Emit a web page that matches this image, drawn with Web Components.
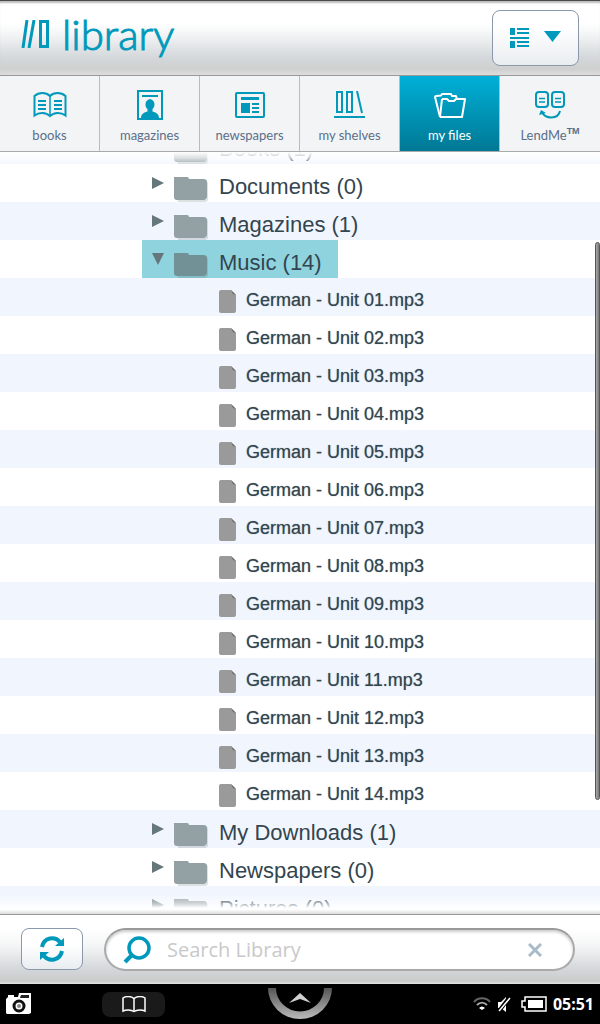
<!DOCTYPE html>
<html lang="en">
<head>
<meta charset="utf-8">
<meta name="viewport" content="width=device-width, initial-scale=1">
<title>library</title>
<style>
  html, body { height: 100%; }
  body {
    margin: 0;
    font-family: "Liberation Sans", Arial, sans-serif;
    --teal: #0099bb;
    --slate: #5b6f8a;
    --ink: #33454e;
  }
</style>
</head>
<body>
<library-app></library-app>

<script>
const ICONS = {
  books: `<svg width="34" height="26" viewBox="0 0 34 26" fill="none" stroke="currentColor" stroke-width="2">
    <path d="M17 4C13 0 6 0 1.500 4V23.500C6 20 13 20 17 24C21 20 28 20 32.500 23.500V4C28 0 21 0 17 4Z"/>
    <path d="M17 4V24" stroke-width="1.500"/>
    <path d="M5 9h8M5 13h8M5 17h8M21 9h8M21 13h8M21 17h8"/></svg>`,
  magazines: `<svg width="26" height="30" viewBox="0 0 26 30">
    <path d="M1 1h24v28H1Z" fill="none" stroke="currentColor" stroke-width="2"/>
    <path d="M5 5h16v2H5ZM4 28.500C4 24 6 23 10.500 21.500V19C7.500 17 7.500 10 13 9C18.500 10 18.500 17 15.500 19V21.500C20 23 22 24 22 28.500Z" fill="currentColor"/></svg>`,
  newspapers: `<svg width="30" height="26" viewBox="0 0 30 26">
    <rect x="1" y="1" width="28" height="24" rx="1" fill="none" stroke="currentColor" stroke-width="2"/>
    <path d="M6 5h18v3H6ZM6 11h9v10H6ZM17 11h7v2h-7ZM17 15h7v2h-7ZM17 19h7v2h-7Z" fill="currentColor"/></svg>`,
  shelves: `<svg width="32" height="28" viewBox="0 0 32 28" fill="none" stroke="currentColor" stroke-width="2">
    <path d="M3 1h5v20H3ZM13 1h5v20h-5ZM0 26h31"/><path d="M23 0L28 22"/></svg>`,
  files: `<svg width="34" height="26" viewBox="0 0 34 26" fill="none" stroke="currentColor" stroke-width="2" stroke-linejoin="round">
    <path d="M7 25L2 5Q2 4 3 4L8 3.500L9 2H18L19 4H23L24 7"/>
    <path d="M9 7H14L16 9H21L23 7H32L29 25H7"/><path d="M9 7L7 25"/></svg>`,
  lend: `<svg width="32" height="28" viewBox="0 0 32 28" fill="none" stroke="currentColor" stroke-width="2">
    <rect x="2" y="1" width="12" height="15" rx="3"/><rect x="18" y="1" width="12" height="15" rx="3"/>
    <path d="M5 7.500h6M5 11h6M21 7.500h6M21 11h6" stroke-width="1.500"/>
    <path d="M8 21C11 28 24 29 26 20"/><path d="M5 24L7 19L12 22Z" fill="currentColor" stroke="none"/></svg>`,
  camera: `<svg width="26" height="22" viewBox="0 0 26 22">
    <path d="M2 4V2H8V4H12L13 0H25V6V20L23 21H1L0 20V6Z" fill="#fff"/>
    <path d="M15 2h8v3h-9Z" fill="#222"/><circle cx="13" cy="13" r="5" fill="#fff" stroke="#111" stroke-width="3"/>
    <circle cx="13" cy="13" r="2" fill="#888"/></svg>`,
  reading: `<svg width="24" height="17" viewBox="0 0 24 17" fill="none" stroke="#fff" stroke-width="1.500">
    <path d="M12 2.500C9 0 4 0 1 2V15C4 13.500 9 13.500 12 15.500C15 13.500 20 13.500 23 15V2C20 0 15 0 12 2.500Z"/><path d="M12 2V15"/></svg>`,
  home: `<svg width="66" height="36" viewBox="0 0 66 36">
    <defs><linearGradient id="ring" x2="0" y2="1"><stop offset="0" stop-color="#555"/><stop offset="1" stop-color="#bbb"/></linearGradient></defs>
    <path d="M1 4A32 31 0 0 0 65 4H57A24 23.500 0 0 1 9 4Z" fill="url(#ring)"/>
    <path d="M33 9L44 19L33 15L22 19Z" fill="#d0d0d0"/></svg>`,
  wifi: `<svg width="18" height="14" viewBox="0 0 18 14" fill="none" stroke-width="2">
    <path d="M1 5C5 0 13 0 17 5" stroke="#666"/><path d="M4 8C7 5 11 5 14 8" stroke="#aaa"/>
    <path d="M6 11C8 9 10 9 12 11L9 13Z" fill="#fff" stroke="none"/></svg>`,
  mute: `<svg width="14" height="15" viewBox="0 0 14 15">
    <path d="M1 5H4L9 0V15L4 11H1Z" fill="#fff"/><path d="M12 1L2 14" stroke="#000" stroke-width="4"/><path d="M13 1L2 14" stroke="#fff" stroke-width="1.500"/></svg>`,
  battery: `<svg width="26" height="16" viewBox="0 0 26 16">
    <path d="M4 1H25V15H4V11H1V5H4Z" fill="none" stroke="#fff" stroke-width="1.500"/><path d="M7 4h15v8H7Z" fill="#fff"/></svg>`
};

class LibraryHeader extends HTMLElement {
  constructor() {
    super();
    this.attachShadow({ mode: "open" });
    this.shadowRoot.innerHTML = `
      <style>
        :host {
          display: flex;
          align-items: center;
          justify-content: space-between;
          box-sizing: border-box;
          height: 76px;
          padding: 0 21px;
          background: linear-gradient(#fff 30%, #f6f7f8 42%, #d3d7da 78%, #cfcfcf 92%, #dedede);
          border-top: 1px solid #4d494b;
          border-bottom: 1px solid #999;
          box-shadow: inset 0 3px 2px -1px #bbb;
        }
        h1 {
          display: flex;
          align-items: center;
          gap: 12px;
          margin: 0 0 8px;
          color: var(--teal);
          font: 300 42px/48px Lato, sans-serif;
          -webkit-text-stroke: 1px var(--teal);
        }
        button {
          display: flex;
          align-items: center;
          justify-content: center;
          gap: 15px;
          width: 87px;
          height: 56px;
          padding: 0;
          border: 1px solid #8a98ac;
          border-radius: 8px;
          background: linear-gradient(#fff 30%, #e9edf0);
          color: var(--teal);
        }
        svg { display: block; }
      </style>
      <h1>
        <svg width="29" height="28" viewBox="0 0 29 28" fill="none" stroke="currentColor" aria-hidden="true">
          <path d="M6 0L2 28M13 0L8 28" stroke-width="3"/><path d="M19.500 1.500h7v25h-7Z" stroke-width="3"/>
        </svg>
        <span>library</span>
      </h1>
      <button type="button" aria-label="View options">
        <svg width="19" height="20" viewBox="0 0 19 20" fill="currentColor">
          <path d="M0 0h5v7H0ZM7 0h12v2H7ZM7 4h12v2H7ZM0 9h19v2H0ZM0 13h5v7H0ZM7 13h12v2H7ZM7 17h12v2H7Z"/>
        </svg>
        <svg width="17" height="15" viewBox="0 0 17 15" fill="currentColor"><path d="M0 0h17L8.500 11Z"/></svg>
      </button>`;
  }
}

class LibraryTab extends HTMLElement {
  constructor() {
    super();
    this.attachShadow({ mode: "open" });
    this.shadowRoot.innerHTML = `
      <style>
        :host { display: block; border-right: 1px solid #bbb; }
        :host(:last-child) { border-right: 0; }
        a {
          display: grid;
          grid-template-rows: 1fr 20px;
          justify-items: center;
          box-sizing: border-box;
          height: 75px;
          padding: 8px 0 6px;
          background: #f2f4f5;
          color: var(--slate);
          font: 13px/20px Lato, sans-serif;
          text-decoration: none;
        }
        .icon { display: flex; align-items: center; color: var(--teal); }
        :host([active]) a { background: linear-gradient(#00b0d8, #007894); color: #fff; }
        :host([active]) .icon { color: #fff; }
        ::slotted(sup) { font: bold 9px/10px "Liberation Sans", sans-serif; vertical-align: 6px; }
      </style>
      <a href="#"><span class="icon">${ICONS[this.getAttribute("icon")]}</span><span><slot></slot></span></a>`;
  }
}

class TreeItem extends HTMLElement {
  constructor() {
    super();
    this.attachShadow({ mode: "open" });
    const folder = `
      <svg class="arrow" width="12" height="12" viewBox="0 0 12 12"><path d="${this.hasAttribute("open") ? "M0 0H12L6 12Z" : "M0 0L12 6L0 12Z"}" fill="#66777b"/></svg>
      <svg class="folder" width="36" height="26" viewBox="0 0 36 26">
        <path d="M2 4H14L17 5H32Q34 5 34 8V24Q33 26 31 26H4Z" fill="#5c6b70" opacity=".2"/>
        <path d="M0 1H13Q15 1 15 3H30Q32 3 33 5V21Q32 24 30 24H3Q0 24 0 21Z" fill="${this.hasAttribute("open") ? "#729197" : "#93a0a4"}"/>
      </svg>`;
    const file = `
      <svg class="file" width="17" height="23" viewBox="0 0 17 23">
        <path d="M2 0H12L17 5V21Q17 23 15 23H2Q0 23 0 21V2Q0 0 2 0Z" fill="#9a9a9a"/><path d="M12 0L17 5L14 4Z" fill="#666"/>
      </svg>`;
    this.shadowRoot.innerHTML = `
      <style>
        :host { display: flex; flex: none; height: 38px; padding-left: 142px; }
        .row {
          display: flex;
          box-sizing: border-box;
          padding: 0 16px 0 10px;
          color: var(--ink);
          font-size: 22px;
          line-height: 46px;
          white-space: nowrap;
        }
        :host([open]) .row { background: #8fd3df; }
        :host([file]) .row {
          padding-left: 77px;
          font-size: 18px;
          line-height: 44px;
          text-shadow: 0 0 1px rgba(51, 69, 78, 0.6);
        }
        svg { flex: none; }
        .arrow { margin: 13px 10px 0 0; }
        .folder { margin: 12px 9px 0 0; }
        .file { margin: 12px 10px 0 0; }
      </style>
      <div class="row">${this.hasAttribute("file") ? file : folder}<span><slot></slot></span></div>`;
  }
}

class FileTree extends HTMLElement {
  constructor() {
    super();
    this.attachShadow({ mode: "open" });
    this.shadowRoot.innerHTML = `
      <style>
        :host { display: block; flex: 1; min-height: 0; position: relative; }
        .scroller { height: 100%; overflow: auto; scrollbar-width: none; }
        ::slotted(tree-item:nth-child(odd)) { background: #f1f6fe; }
        /* fades and thumb lie over the scrolling rows */
        .fade { position: absolute; left: 0; right: 0; pointer-events: none; }
        .top { top: 0; height: 14px; background: linear-gradient(#fff, rgba(255,255,255,0.7) 40%, rgba(255,255,255,0)); }
        .bottom { bottom: 0; height: 20px; background: linear-gradient(rgba(255,255,255,0), rgba(255,255,255,0.6) 50%, #fff 70%, #fff 76%, #ddd); }
        .thumb {
          position: absolute;
          top: 90px;
          bottom: 114px;
          right: 0;
          width: 5px;
          box-sizing: border-box;
          border: 1px solid #555;
          border-radius: 3px;
          background: linear-gradient(90deg, #aaa, #777);
        }
      </style>
      <div class="scroller"><slot></slot></div>
      <div class="fade top"></div>
      <div class="fade bottom"></div>
      <div class="thumb"></div>`;
  }

  scrollToOffset(offset) {
    this.shadowRoot.querySelector(".scroller").scrollTop = offset;
  }
}

class SearchBar extends HTMLElement {
  constructor() {
    super();
    this.attachShadow({ mode: "open" });
    this.shadowRoot.innerHTML = `
      <style>
        :host {
          display: flex;
          gap: 21px;
          box-sizing: border-box;
          height: 70px;
          padding: 13px 25px 13px 21px;
          border-top: 1px solid #999;
          background: linear-gradient(#fff 20%, #f4f5f6 45%, #d3d6d9 80%, #cacaca 96%, #e4e4e4);
        }
        button { display: flex; align-items: center; justify-content: center; padding: 0; border: 0; background: none; color: var(--teal); }
        .refresh {
          width: 62px;
          height: 42px;
          border: 1px solid #8a98ac;
          border-radius: 8px;
          background: linear-gradient(#fff 40%, #e9edf0);
        }
        .search {
          display: flex;
          flex: 1;
          align-items: center;
          gap: 16px;
          min-width: 0;
          box-sizing: border-box;
          height: 43px;
          padding: 0 31px 0 17px;
          border: 2px solid #aaa;
          border-top-color: #999;
          border-radius: 22px;
          background: #fff;
          box-shadow: inset 0 2px 3px #ccc;
          color: var(--teal);
        }
        svg { display: block; flex: none; }
        input {
          flex: 1;
          min-width: 0;
          padding: 0;
          border: 0;
          outline: 0;
          background: none;
          color: var(--ink);
          font: 20px/28px "Open Sans", sans-serif;
        }
        input::placeholder { color: #c9c9c9; opacity: 1; }
        .clear { color: #a9bac8; }
      </style>
      <button class="refresh" type="button" aria-label="Refresh">
        <svg width="26" height="26" viewBox="0 0 26 26" fill="none" stroke="currentColor" stroke-width="4">
          <path d="M3 11C5 1 16 0 21 6"/><path d="M23 15C21 25 10 26 5 20"/>
          <path d="M25 2V10H16ZM1 24V16H10Z" fill="currentColor" stroke="none"/>
        </svg>
      </button>
      <label class="search">
        <svg width="28" height="28" viewBox="0 0 28 28" fill="none" stroke="currentColor">
          <circle cx="16" cy="12" r="10" stroke-width="3.500"/><path d="M9 19L2 26" stroke-width="4"/>
        </svg>
        <input type="text" placeholder="Search Library" aria-label="Search Library">
        <button class="clear" type="button" aria-label="Clear">
          <svg width="14" height="14" viewBox="0 0 14 14" stroke="currentColor" stroke-width="3"><path d="M1 1L13 13M13 1L1 13"/></svg>
        </button>
      </label>`;
  }
}

class StatusBar extends HTMLElement {
  constructor() {
    super();
    this.attachShadow({ mode: "open" });
    this.shadowRoot.innerHTML = `
      <style>
        :host {
          display: grid;
          grid-template-columns: 1fr 66px 1fr;
          height: 40px;
          background: #000;
          color: #fff;
          font: bold 16px/24px "Noto Sans", sans-serif;
        }
        div { display: flex; align-items: center; }
        .left { gap: 70px; padding-left: 6px; }
        .right { justify-content: flex-end; gap: 6px; padding-right: 6px; }
        button { display: flex; align-items: center; justify-content: center; padding: 0; border: 0; background: none; }
        .reading { width: 63px; height: 25px; border-radius: 8px; background: #1a1a1a; }
        .home { align-items: start; }
        .home svg { display: block; }
        .battery { display: flex; margin: 0 0 0 4px; }
      </style>
      <div class="left">
        <button type="button" aria-label="Camera">${ICONS.camera}</button>
        <button class="reading" type="button" aria-label="Now reading">${ICONS.reading}</button>
      </div>
      <button class="home" type="button" aria-label="Quick menu">${ICONS.home}</button>
      <div class="right">${ICONS.wifi}${ICONS.mute}<span class="battery">${ICONS.battery}</span><span>05:51</span></div>`;
  }
}

class LibraryApp extends HTMLElement {
  constructor() {
    super();
    this.attachShadow({ mode: "open" });
    this.tracks = Array.from({ length: 14 }, (_, i) => String(i + 1).padStart(2, "0"));
    this.render();
  }

  connectedCallback() {
    this.shadowRoot.querySelector("file-tree").scrollToOffset(26);
  }

  render() {
    this.shadowRoot.innerHTML = `
      <style>
        :host { display: flex; flex-direction: column; height: 100%; overflow: hidden; background: #fff; }
        nav { display: grid; grid-template-columns: repeat(6, 1fr); flex: none; border-bottom: 1px solid #aaa; }
        library-header, search-bar, status-bar { flex: none; }
      </style>
      <library-header></library-header>
      <nav>
        <library-tab icon="books">books</library-tab>
        <library-tab icon="magazines">magazines</library-tab>
        <library-tab icon="newspapers">newspapers</library-tab>
        <library-tab icon="shelves">my shelves</library-tab>
        <library-tab icon="files" active>my files</library-tab>
        <library-tab icon="lend">LendMe<sup>TM</sup></library-tab>
      </nav>
      <file-tree>
        <tree-item>Books (1)</tree-item>
        <tree-item>Documents (0)</tree-item>
        <tree-item>Magazines (1)</tree-item>
        <tree-item open>Music (14)</tree-item>
        ${this.tracks.map((n) => `<tree-item file>German - Unit ${n}.mp3</tree-item>`).join("")}
        <tree-item>My Downloads (1)</tree-item>
        <tree-item>Newspapers (0)</tree-item>
        <tree-item>Pictures (0)</tree-item>
      </file-tree>
      <search-bar></search-bar>
      <status-bar></status-bar>`;
  }
}

customElements.define("library-header", LibraryHeader);
customElements.define("library-tab", LibraryTab);
customElements.define("tree-item", TreeItem);
customElements.define("file-tree", FileTree);
customElements.define("search-bar", SearchBar);
customElements.define("status-bar", StatusBar);
customElements.define("library-app", LibraryApp);
</script>
</body>
</html>
